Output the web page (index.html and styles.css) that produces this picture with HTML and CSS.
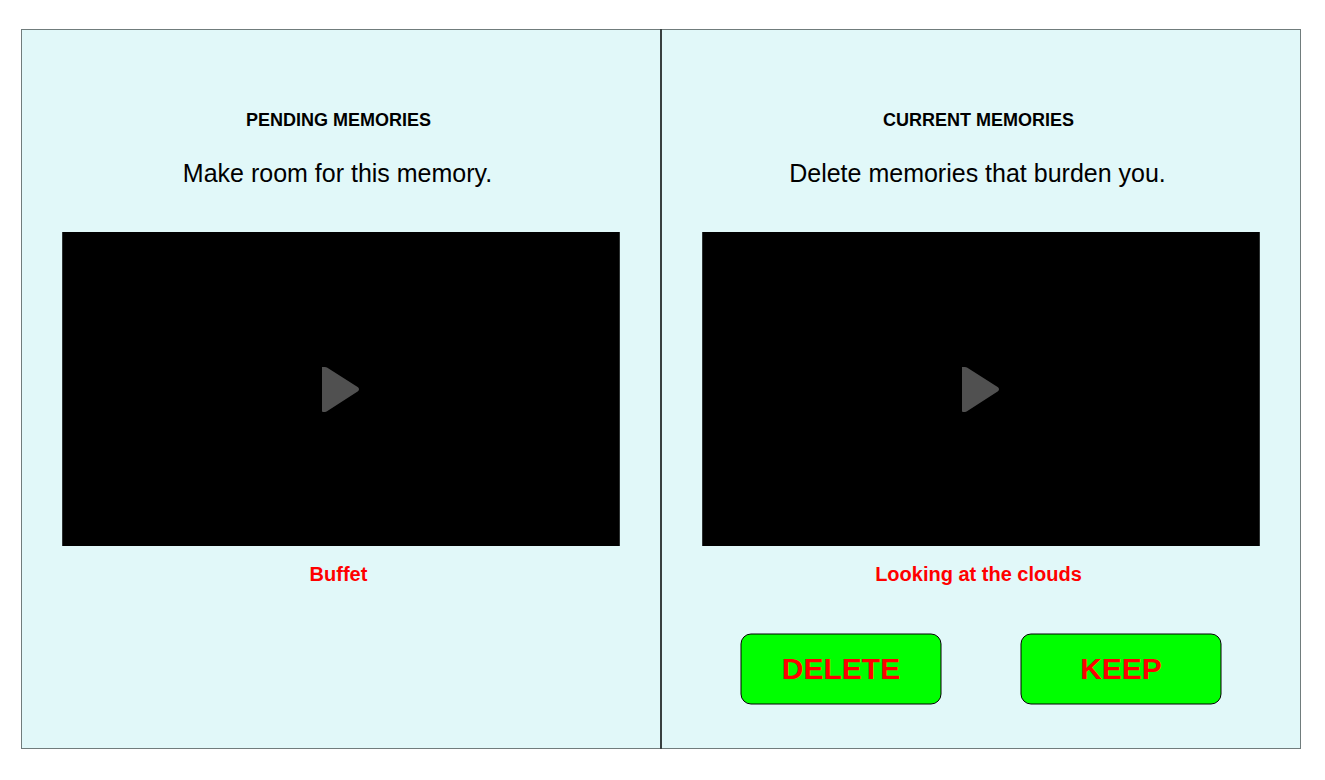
FILE: index.html
```html
<!DOCTYPE html>
<html lang="en">
<head>
<meta charset="utf-8">
<title>Memories</title>
<link rel="stylesheet" href="styles.css">
</head>
<body>
<main class="board">
  <section class="panel">
    <h2 class="title">PENDING MEMORIES</h2>
    <p class="hint">Make room for this memory.</p>
    <div class="video"><svg class="play" viewBox="0 0 38 46"><path d="M0 1H3Q4 1 5 1.6L36 21.2Q37 22 37 23.2Q37 24.4 36 25.2L5 45.2Q4 46 3 46H1Q0 46 0 45Z"/></svg></div>
    <p class="caption">Buffet</p>
  </section>
  <section class="panel">
    <h2 class="title">CURRENT MEMORIES</h2>
    <p class="hint">Delete memories that burden you.</p>
    <div class="video"><svg class="play" viewBox="0 0 38 46"><path d="M0 1H3Q4 1 5 1.6L36 21.2Q37 22 37 23.2Q37 24.4 36 25.2L5 45.2Q4 46 3 46H1Q0 46 0 45Z"/></svg></div>
    <p class="caption">Looking at the clouds</p>
    <div class="actions">
      <button class="action" type="button"><svg class="plate" viewBox="0 0 202 72"><rect x="1" y="1" width="200" height="70" rx="10"/></svg><span class="label">DELETE</span></button>
      <button class="action" type="button"><svg class="plate" viewBox="0 0 202 72"><rect x="1" y="1" width="200" height="70" rx="10"/></svg><span class="label">KEEP</span></button>
    </div>
  </section>
</main>
</body>
</html>
```
FILE: styles.css
```css
* { box-sizing: border-box; }
body {
  margin: 0;
  padding: 29px 24px 31px 21px;
  background: #fff;
  font-family: "Liberation Sans", Arial, sans-serif;
  color: #000;
}
.board {
  display: grid;
  grid-template-columns: 640px 640px;
  height: 720px;
  background: #e1f8f9;
  border: 1px solid #707c7c;
}
.panel { padding: 0 40px; }
.panel + .panel {
  border-left: 2px solid #384040;
  margin: -1px 0 -1px -2px;
  padding-top: 1px;
}
.title, .hint, .caption { margin: 0; text-align: center; white-space: nowrap; }
.title { padding: 80px 7px 0 0; font-size: 18px; line-height: 20px; }
.hint { padding: 28px 9px 0 0; font-size: 25px; line-height: 30px; }
.video {
  display: flex;
  align-items: center;
  justify-content: center;
  width: 558px;
  height: 314px;
  margin-top: 44px;
  background: #000;
  border: solid #2d3232;
  border-width: 0 1px;
}
.play { width: 38px; height: 46px; fill: #505050; }
.caption {
  padding: 16px 7px 0 0;
  font-size: 20px;
  font-weight: bold;
  line-height: 24px;
  color: #f00;
}
.actions { display: flex; gap: 78px; padding: 47px 0 0 38px; }
.action {
  position: relative;
  width: 202px;
  height: 72px;
  padding: 0;
  border: 0;
  background: none;
  color: #f00;
  font: bold 30px "Liberation Sans", Arial, sans-serif;
}
.plate {
  position: absolute;
  inset: 0;
  width: 202px;
  height: 72px;
  fill: #0f0;
  stroke: #000;
  stroke-width: 1;
}
.label { position: relative; }
```
